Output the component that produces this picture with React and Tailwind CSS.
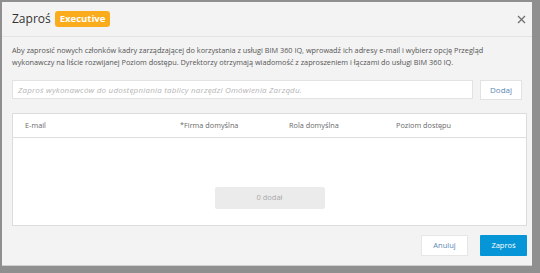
export default function App() {
    return (
        <div className="w-[540px] h-[273px] bg-[#8f8f8f] pl-[2px] pt-[2px] overflow-hidden" style={{ fontFamily: '"Open Sans", "Liberation Sans", sans-serif' }}>
            <div className="w-[530px] h-[264px] bg-[#f3f3f3] flex flex-col border-b border-[#d0d0d0]">
                {/* Header */}
                <div className="h-[35px] flex items-center justify-between pl-[10px] pr-[6px] border-b border-[#e3e3e3]">
                    <div className="flex items-center gap-[4px]">
                        <span className="text-[12px] text-[#333]">Zaproś</span>
                        <span className="bg-[#fbac1c] text-white text-[9.5px] font-bold rounded-[3px] px-[5px] h-[16px] leading-[16px]">
                            Executive
                        </span>
                    </div>
                    <svg width="9" height="9" viewBox="0 0 9 9">
                        <path d="M1 1 L8 8 M8 1 L1 8" stroke="#707070" strokeWidth="1.3" />
                    </svg>
                </div>

                <div className="px-[10px] flex flex-col">
                    <p className="text-[7.3px] leading-[12px] text-[#555] mt-[7px]">
                        Aby zaprosić nowych członków kadry zarządzającej do korzystania z usługi BIM 360 IQ, wprowadź ich adresy e-mail i wybierz opcję Przegląd wykonawczy na liście rozwijanej Poziom dostępu. Dyrektorzy otrzymają wiadomość z zaproszeniem i łączami do usługi BIM 360 IQ.
                    </p>

                    <div className="flex gap-[7px] mt-[12px]">
                        <div className="w-[495px] h-[19px] bg-white border border-[#e2e2e2] flex items-center px-[5px]">
                            <span className="text-[8px] italic text-[#b5b5b5] tracking-[0.2px]">
                                Zaproś wykonawców do udostępniania tablicy narzędzi Omówienia Zarządu.
                            </span>
                        </div>
                        <button className="w-[45px] h-[20px] bg-white border border-[#e2e2e2] text-[8px] text-[#5a87b5]">
                            Dodaj
                        </button>
                    </div>

                    <div className="mt-[13px] w-[515px] h-[113px] bg-white border border-[#dcdcdc] flex flex-col">
                        <div className="h-[24px] flex items-center border-b border-[#dedede] text-[7.3px] text-[#6a6a6a]">
                            <span className="w-[167px] pl-[12px]">E-mail</span>
                            <span className="w-[109px]">*Firma domyślna</span>
                            <span className="w-[107px]">Rola domyślna</span>
                            <span>Poziom dostępu</span>
                        </div>
                        <div className="flex-1 flex items-end justify-center pb-[16px]">
                            <div className="w-[110px] h-[22px] bg-[#ebebeb] rounded-[2px] flex items-center justify-center text-[7.5px] text-[#a8a8a8]">
                                0 dodał
                            </div>
                        </div>
                    </div>
                </div>

                {/* Footer */}
                <div className="flex justify-end gap-[12px] pr-[5px] mt-[9px]">
                    <button className="w-[47px] h-[21px] bg-white border border-[#e6e6e6] text-[7.5px] text-[#5a87b5]">
                        Anuluj
                    </button>
                    <button className="w-[47px] h-[21px] bg-[#0696d7] text-[7.5px] text-white rounded-[1px]">
                        Zaproś
                    </button>
                </div>
            </div>
        </div>
    );
}
